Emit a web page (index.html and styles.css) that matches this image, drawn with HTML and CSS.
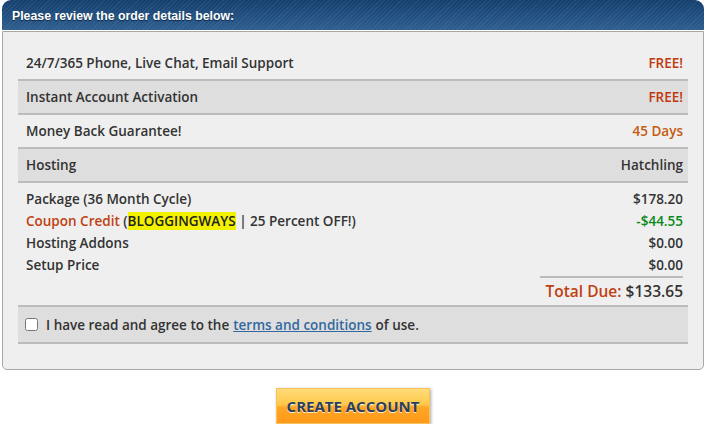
FILE: index.html
```html
<!DOCTYPE html>
<html lang="en">
<head>
  <meta charset="UTF-8" />
  <title>Order Review</title>
  <link rel="stylesheet" href="styles.css">
</head>
<body>
  <div class="order">
    <div class="order-head">Please review the order details below:</div>

    <div class="order-body">
      <div class="row">
        <span>24/7/365 Phone, Live Chat, Email Support</span>
        <span class="free">FREE!</span>
      </div>
      <div class="row shaded">
        <span>Instant Account Activation</span>
        <span class="free">FREE!</span>
      </div>
      <div class="row">
        <span>Money Back Guarantee!</span>
        <span class="days">45 Days</span>
      </div>
      <div class="row shaded">
        <span>Hosting</span>
        <span>Hatchling</span>
      </div>

      <div class="costs">
        <div class="line">
          <span>Package (36 Month Cycle)</span>
          <span>$178.20</span>
        </div>
        <div class="line">
          <span><span class="coupon">Coupon Credit</span> (<mark>BLOGGINGWAYS</mark> | 25 Percent OFF!)</span>
          <span class="credit">-$44.55</span>
        </div>
        <div class="line">
          <span>Hosting Addons</span>
          <span>$0.00</span>
        </div>
        <div class="line">
          <span>Setup Price</span>
          <span>$0.00</span>
        </div>
        <div class="total">
          <span><span class="coupon">Total Due:</span> $133.65</span>
        </div>
      </div>

      <div class="row shaded agree">
        <label><input type="checkbox" /> I have read and agree to the <a href="#">terms and conditions</a> of use.</label>
      </div>
    </div>
  </div>

  <div class="actions">
    <button>CREATE ACCOUNT</button>
  </div>
</body>
</html>
```

FILE: styles.css
```css
body {
  margin: 0;
  padding: 0 2px;
  font-family: 'Open Sans', sans-serif;
  font-size: 13.5px;
  font-weight: 600;
  color: #333;
  background: #fff;
}

.order-head {
  height: 30px;
  line-height: 33px;
  padding-left: 10px;
  border-radius: 9px 9px 0 0;
  background:
    repeating-linear-gradient(135deg, rgba(255, 255, 255, 0.06) 0 1px, transparent 1px 3px),
    linear-gradient(#143f6e, #2e5e8f);
  color: #fff;
  font-family: 'Liberation Sans', sans-serif;
  font-size: 12.3px;
  font-weight: 700;
  text-shadow: 0 1px 1px #0b2545;
  border-bottom: 1px solid #fff;
}

.order-body {
  background: #efefef;
  border: 1px solid #a8a8a8;
  border-radius: 0 0 5px 5px;
  padding: 15px 15px 25px;
}

.row {
  display: flex;
  justify-content: space-between;
  align-items: center;
  height: 32px;
  padding: 0 5px 0 8px;
  border-bottom: 2px solid #bcbcbc;
}

.row.shaded {
  background: #dedede;
}

.free {
  color: #c0390d;
}

.days {
  color: #c85a10;
}

.costs {
  padding: 5px 5px 3px 8px;
  border-bottom: 2px solid #bcbcbc;
}

.line {
  display: flex;
  justify-content: space-between;
  height: 22px;
  line-height: 22px;
}

.coupon {
  color: #c0400f;
}

mark {
  background: #f2f200;
  color: #222;
}

.credit {
  color: #0a8a1a;
}

.total {
  display: flex;
  justify-content: flex-end;
}

.total > span {
  border-top: 2px solid #bcbcbc;
  width: 143px;
  text-align: right;
  padding-top: 2px;
  font-size: 15.5px;
  line-height: 22px;
  white-space: nowrap;
}

.agree {
  height: 35px;
}

.agree label {
  display: flex;
  align-items: center;
  gap: 4px;
}

.agree input {
  margin: 0 4px 0 -1px;
  width: 13px;
  height: 13px;
}

.agree a {
  color: #33689f;
}

.actions {
  display: flex;
  justify-content: center;
  padding-top: 18px;
}

button {
  width: 154px;
  height: 36px;
  border: 1px solid #f7c35a;
  background: linear-gradient(#ffdb7a, #ffc94a 45%, #ffa526 55%, #ff9a18);
  box-shadow: 1px 1px 3px rgba(0, 0, 0, 0.35);
  color: #2b3f5c;
  font-family: 'Open Sans', sans-serif;
  font-size: 15px;
  font-weight: 700;
  text-shadow: 0 1px 0 rgba(255, 255, 255, 0.8);
  cursor: pointer;
}
```
